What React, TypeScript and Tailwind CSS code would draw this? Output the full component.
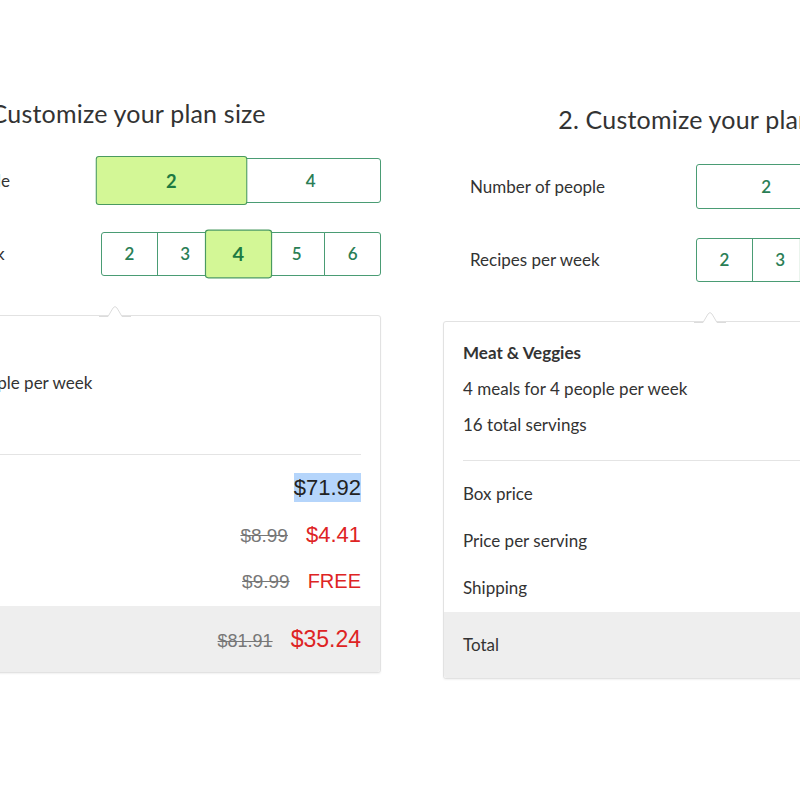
const sans = { fontFamily: "Lato, 'Noto Sans', sans-serif" };
const arial = { fontFamily: "'Liberation Sans', Arial, sans-serif" };

type PlanProps = {
  people: number;
  recipes: number;
  servings: number;
  box: string;
  perOld: string;
  perNew: string;
  totalOld: string;
  totalNew: string;
  highlightBox?: boolean;
};

const Selector = ({
  options,
  value,
  height,
  big,
}: {
  options: number[];
  value: number;
  height: string;
  big: string;
}) => (
  <div className={`flex w-[280px] ${height}`}>
    {options.map((n, i) => {
      const active = n === value;
      const first = i === 0;
      const last = i === options.length - 1;
      return (
        <div
          key={n}
          className={`-ml-px flex flex-1 items-center justify-center border text-[17px] first:ml-0 ${
            active
              ? `relative z-10 rounded-[3px] border-[#4a9a60] bg-[#d3f796] font-bold text-[#1d7a42] ${big}`
              : `border-[#4a9c74] bg-white font-semibold text-[#2a7e55] ${first ? "rounded-l-[3px]" : ""} ${
                  last ? "rounded-r-[3px]" : ""
                }`
          }`}
        >
          {n}
        </div>
      );
    })}
  </div>
);

const Price = ({ old, now, nowSize }: { old: string; now: string; nowSize: string }) => (
  <div className="flex items-baseline gap-[18px]" style={arial}>
    <span className="text-[19px] text-[#777777] line-through">{old}</span>
    <span className={`${nowSize} text-[#de2424]`}>{now}</span>
  </div>
);

const Plan = ({ people, recipes, servings, box, perOld, perNew, totalOld, totalNew, highlightBox }: PlanProps) => (
  <div className="w-[533px] shrink-0 text-[#333333]" style={sans}>
    <h2
      className="h-[32px] text-center text-[25px] leading-[32px] tracking-[0.2px] text-[#333333]"
      style={{ fontFamily: "Lato, 'DejaVu Sans', sans-serif" }}
    >
      2. Customize your plan size
    </h2>

    <div className="mt-[29px] flex items-center">
      <span className="flex-1 pl-[27px] text-[17px]">Number of people</span>
      <Selector options={[2, 4]} value={people} height="h-[45px]" big="scale-x-[1.075] scale-y-[1.09]" />
    </div>

    <div className="mt-[29px] flex items-center">
      <span className="flex-1 pl-[27px] text-[17px]">Recipes per week</span>
      <Selector
        options={[2, 3, 4, 5, 6]}
        value={recipes}
        height="h-[44px]"
        big="-translate-x-[3px] scale-x-[1.18] scale-y-[1.11]"
      />
    </div>

    {/* Card */}
    <div className="relative mt-[39px] h-[358px] rounded-[3px] border border-[#e2e2e2] bg-white shadow-[0_1px_2px_rgba(0,0,0,0.06)]">
      <svg
        className="absolute left-1/2 top-[-11px] -translate-x-1/2"
        width="32"
        height="12"
        viewBox="0 0 32 12"
      >
        <path d="M0 11.5 L9 11.5 L14 3 Q16 0 18 3 L23 11.5 L32 11.5" fill="white" stroke="#dcdcdc" />
      </svg>

      <div className="flex h-full flex-col overflow-hidden rounded-[3px]">
        <div className="px-[19px] pt-[13px]">
          <p className="h-[36px] text-[17px] font-bold leading-[36px]">Meat &amp; Veggies</p>
          <p className="h-[36px] text-[17px] leading-[36px]">
            {recipes} meals for {people} people per week
          </p>
          <p className="h-[36px] text-[17px] leading-[36px]">{servings} total servings</p>
          <div className="mt-[17px] h-px bg-[#e4e4e4]" />
        </div>

        <div className="px-[19px] pt-[9px]">
          <div className="flex h-[47px] items-center justify-between">
            <span className="text-[17px]">Box price</span>
            <span
              className={`text-[22px] leading-[29px] text-[#222222] ${highlightBox ? "bg-[#b5d5fb]" : ""}`}
              style={arial}
            >
              {box}
            </span>
          </div>
          <div className="flex h-[47px] items-center justify-between">
            <span className="text-[17px]">Price per serving</span>
            <Price old={perOld} now={perNew} nowSize="text-[22px]" />
          </div>
          <div className="flex h-[47px] items-center justify-between">
            <span className="text-[17px]">Shipping</span>
            <Price old="$9.99" now="FREE" nowSize="text-[20px]" />
          </div>
        </div>

        <div className="mt-auto flex h-[66px] items-center justify-between bg-[#eeeeee] px-[19px]">
          <span className="text-[17px]">Total</span>
          <div className="flex items-baseline gap-[18px]" style={arial}>
            <span className="text-[18px] text-[#777777] line-through">{totalOld}</span>
            <span className="text-[23px] text-[#de2424]">{totalNew}</span>
          </div>
        </div>
      </div>
    </div>
  </div>
);

export default function App() {
  return (
    <div className="flex h-[800px] w-[800px] overflow-hidden bg-white">
      <div className="ml-[-152px] pt-[97px]">
        <Plan
          people={2}
          recipes={4}
          servings={8}
          box="$71.92"
          perOld="$8.99"
          perNew="$4.41"
          totalOld="$81.91"
          totalNew="$35.24"
          highlightBox
        />
      </div>
      <div className="ml-[62px] pt-[103px]">
        <Plan
          people={4}
          recipes={4}
          servings={16}
          box="$119.84"
          perOld="$7.49"
          perNew="$3.87"
          totalOld="$129.83"
          totalNew="$61.92"
        />
      </div>
    </div>
  );
}
